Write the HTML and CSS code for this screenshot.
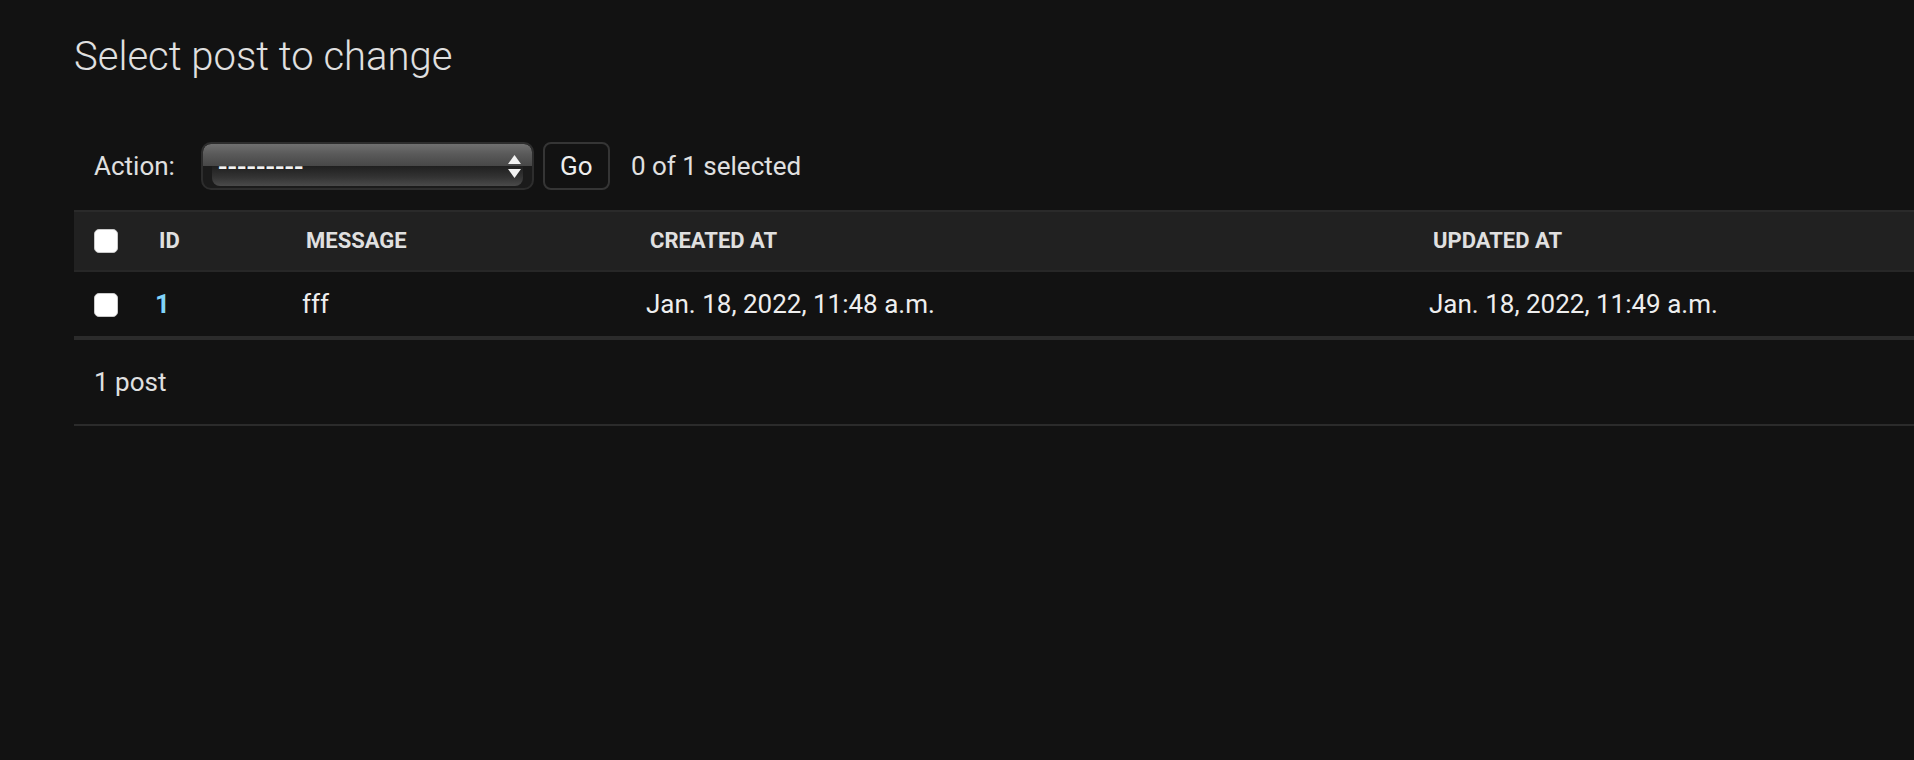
FILE: index.html
```html
<!DOCTYPE html>
<html lang="en">
<head>
<meta charset="utf-8">
<title>Select post to change</title>
<link rel="stylesheet" href="styles.css">
</head>
<body>
<div class="content">
  <h1 class="title">Select post to change</h1>
  <div class="changelist">
    <div class="actions">
      <label class="action-label">Action:</label>
      <div class="select" role="listbox" aria-label="Action">
        <div class="sel-top"></div>
        <div class="sel-bottom"></div>
        <span class="sel-value">---------</span>
        <svg class="sel-arrows" width="13" height="23" viewBox="0 0 13 23" aria-hidden="true">
          <polygon points="0,9 6.5,0 13,9" fill="#f2f2f2"/>
          <polygon points="0,14 13,14 6.5,23" fill="#f2f2f2"/>
        </svg>
      </div>
      <button class="go" type="button">Go</button>
      <span class="counter">0 of 1 selected</span>
    </div>
    <table class="result-list">
      <colgroup>
        <col class="c-check">
        <col class="c-id">
        <col class="c-msg">
        <col class="c-created">
        <col class="c-updated">
      </colgroup>
      <thead>
        <tr>
          <th class="check-col"><span class="checkbox"></span></th>
          <th>ID</th>
          <th>Message</th>
          <th>Created at</th>
          <th>Updated at</th>
        </tr>
      </thead>
      <tbody>
        <tr>
          <td class="check-col"><span class="checkbox"></span></td>
          <th class="row-id"><a href="#">1</a></th>
          <td>fff</td>
          <td>Jan. 18, 2022, 11:48 a.m.</td>
          <td>Jan. 18, 2022, 11:49 a.m.</td>
        </tr>
      </tbody>
    </table>
    <p class="paginator">1 post</p>
  </div>
</div>
</body>
</html>
```
FILE: styles.css
```css
html, body {
  margin: 0;
  padding: 0;
  background: #121212;
}

body {
  font-family: Roboto, "Liberation Sans", sans-serif;
  color: #eeeeee;
  width: 1914px;
  overflow: hidden;
}

.content {
  padding: 34px 0 0 74px;
}

.title {
  margin: 0 0 42px;
  font-size: 40px;
  font-weight: 300;
  line-height: 46px;
  color: #e0e0e0;
}

.actions {
  display: flex;
  align-items: center;
  height: 48px;
  padding: 20px 20px;
  color: #e0e0e0;
  font-size: 26px;
  line-height: 48px;
}

.action-label {
  display: block;
}

.select {
  position: relative;
  box-sizing: border-box;
  width: 333px;
  height: 48px;
  margin-left: 26px;
  border: 2px solid #2d2d2d;
  border-radius: 10px;
  background: #1b1b1b;
  display: flex;
  flex-direction: column;
  overflow: hidden;
}

.sel-top {
  height: 22px;
  flex: none;
  background: linear-gradient(to bottom, #707070 0%, #5a5a5a 45%, #474747 100%);
  border-radius: 8px 8px 0 0;
}

.sel-bottom {
  flex: 1;
  margin: 0 9px 2px 9px;
  background: linear-gradient(to bottom, #1f1f1f 0%, #333333 55%, #4a4a4a 100%);
  border-radius: 0 0 8px 8px;
}

.sel-value {
  position: absolute;
  left: 15px;
  top: 9px;
  font-size: 28px;
  line-height: 28px;
  font-weight: 500;
  color: #f4f4f4;
  letter-spacing: 0;
}

.sel-arrows {
  position: absolute;
  right: 11px;
  top: 11px;
}

.go {
  box-sizing: border-box;
  height: 48px;
  width: 67px;
  margin-left: 9px;
  padding: 0;
  border: 2px solid #353535;
  border-radius: 8px;
  background: #121212;
  color: #eeeeee;
  font-family: Roboto, "Liberation Sans", sans-serif;
  font-size: 26px;
  line-height: 44px;
}

.counter {
  margin-left: 21px;
  color: #e0e0e0;
}

.result-list {
  width: 1840px;
  table-layout: fixed;
  border-collapse: separate;
  border-spacing: 0;
}

.c-check { width: 65px; }
.c-id { width: 147px; }
.c-msg { width: 344px; }
.c-created { width: 783px; }
.c-updated { width: 501px; }

.result-list thead th {
  background: #212121;
  border-top: 2px solid #2a2a2a;
  border-bottom: 2px solid #272727;
  padding: 16px 20px;
  font-size: 22px;
  font-weight: 700;
  line-height: 26px;
  text-transform: uppercase;
  text-align: left;
  color: #e0e0e0;
  white-space: nowrap;
}

.result-list tbody td,
.result-list tbody th {
  padding: 16px 16px;
  font-size: 26px;
  line-height: 32px;
  font-weight: 400;
  text-align: left;
  color: #eeeeee;
  border-bottom: 2px solid #2b2b2b;
  vertical-align: top;
  white-space: nowrap;
}

.result-list tbody th.row-id {
  font-weight: 700;
}

.row-id a {
  color: #81d4fa;
  text-decoration: none;
}

.result-list thead th.check-col,
.result-list tbody td.check-col {
  padding-left: 20px;
  padding-right: 0;
}

.checkbox {
  display: inline-block;
  box-sizing: border-box;
  width: 24px;
  height: 24px;
  background: #ffffff;
  border: 1px solid #c9c9c9;
  border-radius: 5px;
  vertical-align: middle;
}

.result-list thead .checkbox {
  vertical-align: -5px;
}

.result-list tbody .checkbox {
  vertical-align: -4px;
}

.paginator {
  margin: 0;
  padding: 20px 20px;
  font-size: 26px;
  line-height: 44px;
  color: #e0e0e0;
  border-top: 2px solid #2b2b2b;
  border-bottom: 2px solid #2b2b2b;
}
```
